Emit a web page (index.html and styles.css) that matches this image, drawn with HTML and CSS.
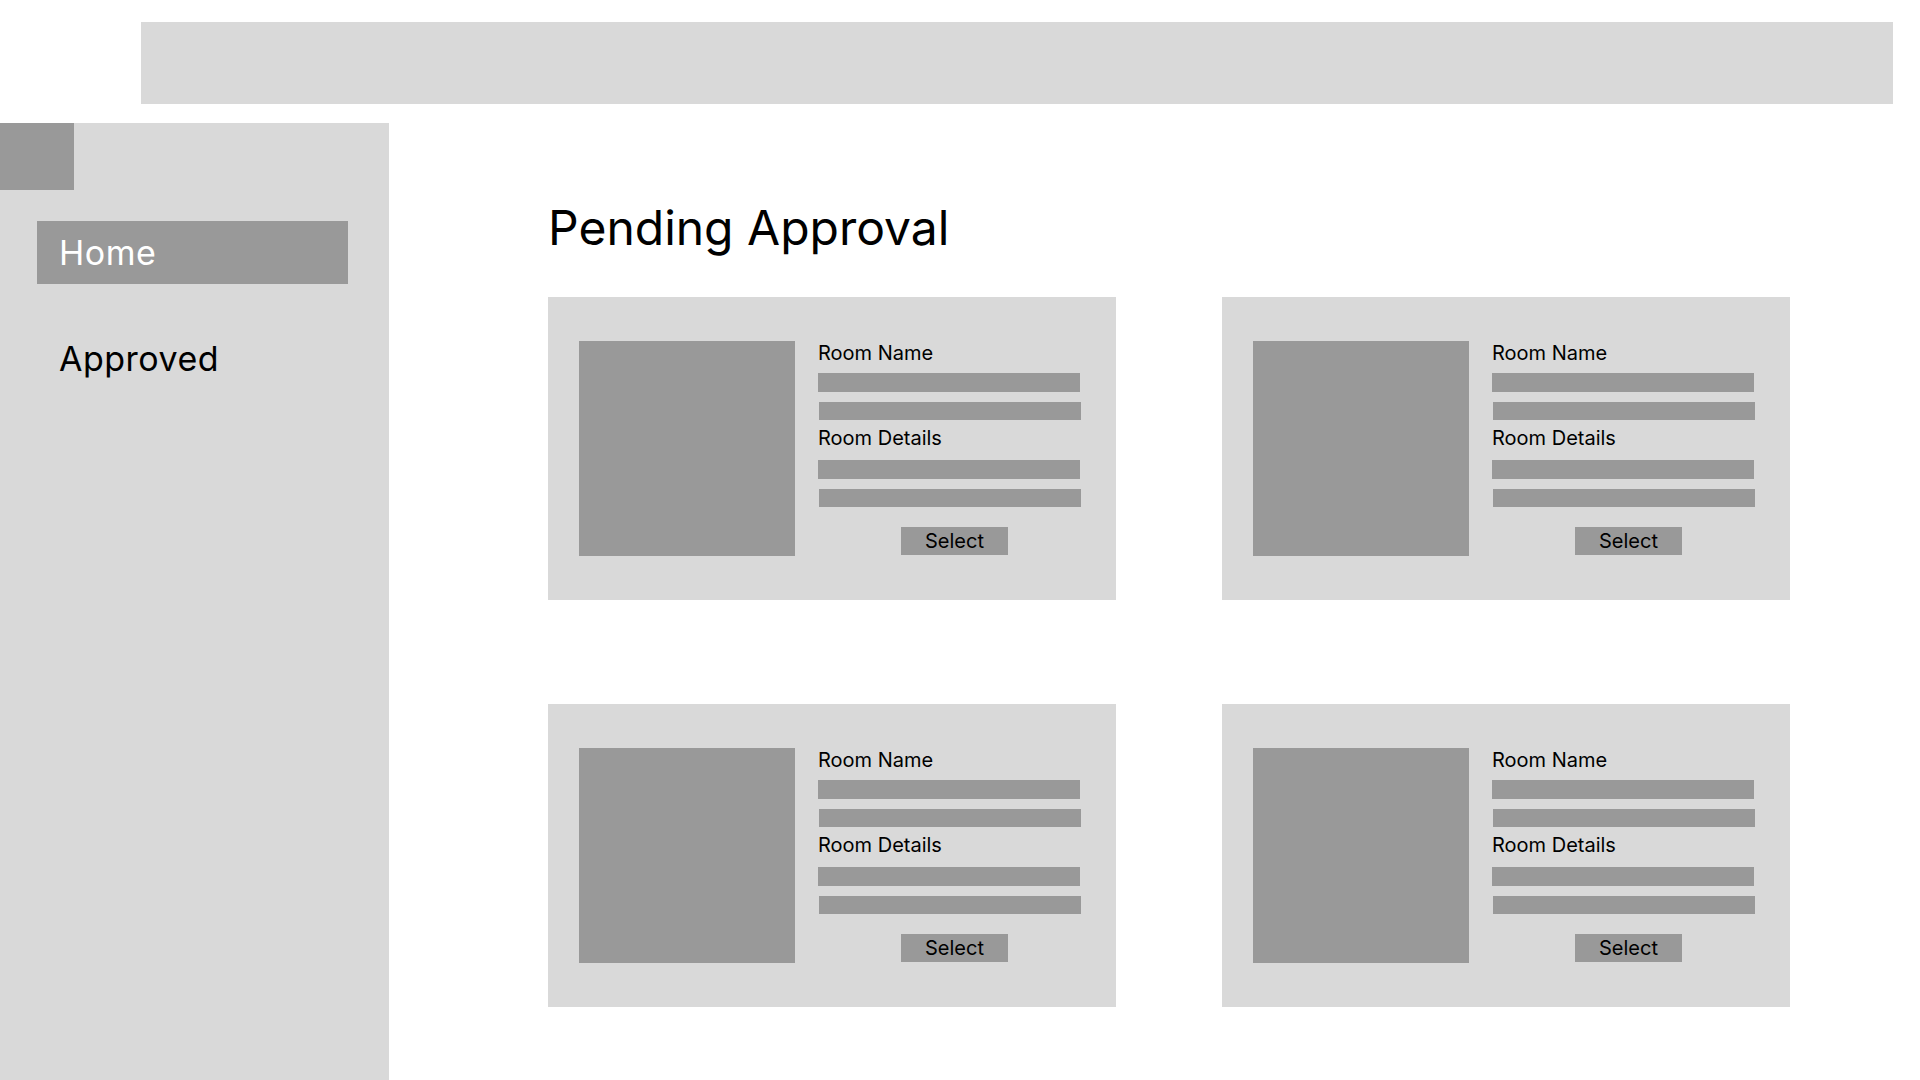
FILE: index.html
```html
<!DOCTYPE html>
<html lang="en">
<head>
<meta charset="utf-8">
<title>Pending Approval</title>
<link rel="stylesheet" href="styles.css">
</head>
<body>
<header class="topbar"></header>
<div class="layout">
  <aside class="sidebar">
    <div class="logo"></div>
    <nav class="nav">
      <a class="nav-item active" href="#">Home</a>
      <a class="nav-item" href="#">Approved</a>
    </nav>
  </aside>
  <main class="main">
    <h1 class="title">Pending Approval</h1>
    <div class="grid">
      <div class="card">
        <div class="thumb"></div>
        <div class="info">
          <div class="label">Room Name</div>
          <div class="bar"></div>
          <div class="bar shift"></div>
          <div class="label second">Room Details</div>
          <div class="bar"></div>
          <div class="bar shift"></div>
          <button class="select">Select</button>
        </div>
      </div>
      <div class="card">
        <div class="thumb"></div>
        <div class="info">
          <div class="label">Room Name</div>
          <div class="bar"></div>
          <div class="bar shift"></div>
          <div class="label second">Room Details</div>
          <div class="bar"></div>
          <div class="bar shift"></div>
          <button class="select">Select</button>
        </div>
      </div>
      <div class="card">
        <div class="thumb"></div>
        <div class="info">
          <div class="label">Room Name</div>
          <div class="bar"></div>
          <div class="bar shift"></div>
          <div class="label second">Room Details</div>
          <div class="bar"></div>
          <div class="bar shift"></div>
          <button class="select">Select</button>
        </div>
      </div>
      <div class="card">
        <div class="thumb"></div>
        <div class="info">
          <div class="label">Room Name</div>
          <div class="bar"></div>
          <div class="bar shift"></div>
          <div class="label second">Room Details</div>
          <div class="bar"></div>
          <div class="bar shift"></div>
          <button class="select">Select</button>
        </div>
      </div>
    </div>
  </main>
</div>
</body>
</html>
```

FILE: styles.css
```css
* { box-sizing: border-box; }
html, body { margin: 0; padding: 0; }
body {
  background: #ffffff;
  font-family: Inter, "Noto Sans", "Liberation Sans", sans-serif;
  color: #000000;
  height: 1080px;
  overflow: hidden;
  display: flex;
  flex-direction: column;
}
.topbar {
  margin: 22px 27px 0 141px;
  height: 82px;
  background: #d9d9d9;
  flex: none;
}
.layout {
  margin-top: 19px;
  flex: 1;
  display: flex;
}
.sidebar {
  width: 389px;
  background: #d9d9d9;
  flex: none;
}
.logo {
  width: 74px;
  height: 67px;
  background: #999999;
}
.nav {
  display: flex;
  flex-direction: column;
  padding-top: 31px;
}
.nav-item {
  display: block;
  text-decoration: none;
  color: #000000;
  font-size: 34px;
  letter-spacing: 0.5px;
  line-height: 39px;
  padding-left: 59px;
}
.nav-item.active {
  margin-left: 37px;
  width: 311px;
  height: 63px;
  line-height: 63px;
  padding-left: 22px;
  background: #999999;
  color: #ffffff;
  margin-bottom: 55px;
}
.main {
  flex: 1;
  padding-left: 159px;
}
.title {
  margin: 77px 0 41px 0;
  font-size: 48px;
  line-height: 56px;
  font-weight: 400;
}
.grid {
  display: grid;
  grid-template-columns: 568px 568px;
  column-gap: 106px;
  row-gap: 104px;
}
.card {
  height: 303px;
  background: #d9d9d9;
  padding: 44px 36px 44px 31px;
  display: flex;
  gap: 23px;
}
.thumb {
  width: 216px;
  height: 215px;
  background: #999999;
  flex: none;
}
.info {
  width: 263px;
  display: flex;
  flex-direction: column;
}
.label {
  font-size: 20px;
  line-height: 23px;
  padding-top: 1px;
  margin-bottom: 8px;
}
.label.second {
  margin-top: 6px;
  margin-bottom: 10px;
}
.bar {
  width: 262px;
  height: 19px;
  background: #999999;
}
.bar.shift {
  margin-left: 1px;
  margin-top: 10px;
  height: 18px;
}
.select {
  margin-top: 20px;
  margin-left: 83px;
  width: 107px;
  height: 28px;
  border: 0;
  padding: 1px 0 0 0;
  background: #999999;
  font-family: Inter, "Noto Sans", "Liberation Sans", sans-serif;
  font-size: 20px;
  line-height: 27px;
  color: #000000;
  text-align: center;
}
```
